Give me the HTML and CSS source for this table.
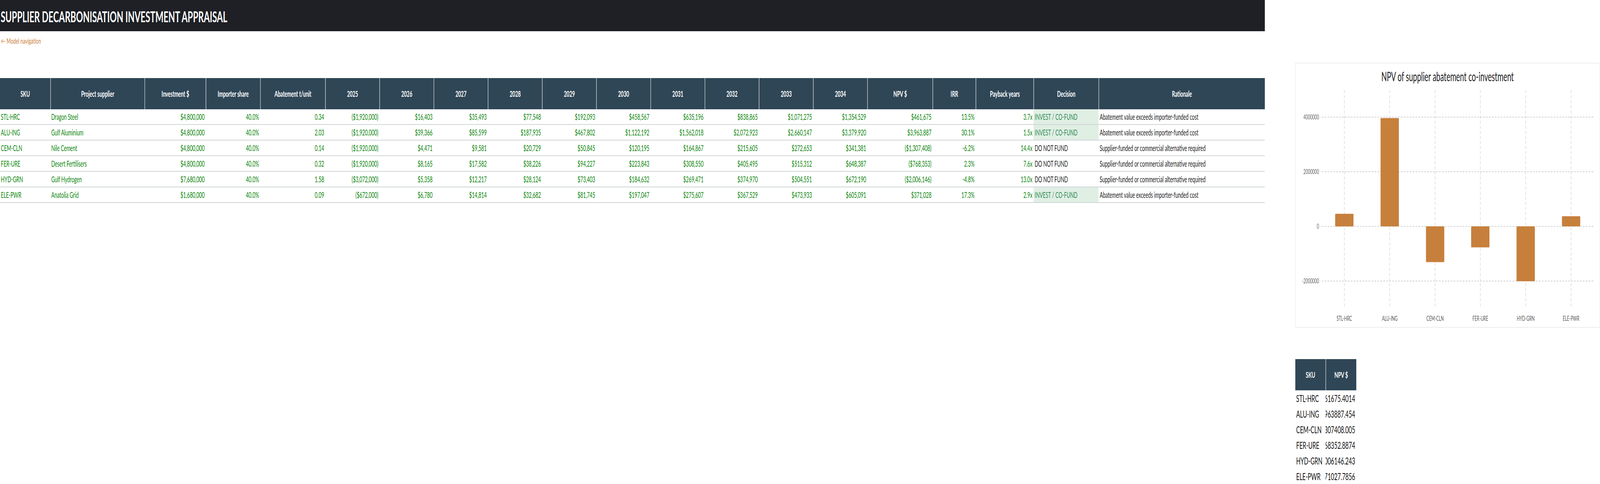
FILE: index.html
```html
<!DOCTYPE html>
<html lang="en">
<head>
<meta charset="utf-8">
<title>Supplier Decarbonisation Investment Appraisal</title>
<link rel="stylesheet" href="styles.css">
</head>
<body>
<div class="page">
  <main class="main">
    <header class="topbar"><h1 class="title">SUPPLIER DECARBONISATION INVESTMENT APPRAISAL</h1></header>
    <a class="nav-link" href="#">← Model navigation</a>
    <table class="grid">
      <colgroup>
        <col style="width:223px"><col style="width:417px"><col style="width:271px"><col style="width:241px"><col style="width:288px">
        <col style="width:240px"><col style="width:240px"><col style="width:240px"><col style="width:240px"><col style="width:240px">
        <col style="width:240px"><col style="width:240px"><col style="width:240px"><col style="width:240px"><col style="width:240px">
        <col style="width:289px"><col style="width:191px"><col style="width:256px"><col style="width:288px"><col style="width:736px">
      </colgroup>
      <thead>
        <tr>
          <th>SKU</th><th>Project supplier</th><th>Investment $</th><th>Importer share</th><th>Abatement t/unit</th>
          <th>2025</th><th>2026</th><th>2027</th><th>2028</th><th>2029</th><th>2030</th><th>2031</th><th>2032</th><th>2033</th><th>2034</th>
          <th>NPV $</th><th>IRR</th><th>Payback years</th><th>Decision</th><th>Rationale</th>
        </tr>
      </thead>
      <tbody>
        <tr>
          <td class="txt">STL-HRC</td><td class="txt">Dragon Steel</td><td>$4,800,000</td><td>40.0%</td><td>0.34</td>
          <td>($1,920,000)</td><td>$16,403</td><td>$35,493</td><td>$77,548</td><td>$192,093</td><td>$458,567</td><td>$635,196</td><td>$838,865</td><td>$1,071,275</td><td>$1,354,529</td>
          <td>$461,675</td><td>13.5%</td><td>3.7x</td><td class="decision invest">INVEST / CO-FUND</td><td class="rationale">Abatement value exceeds importer-funded cost</td>
        </tr>
        <tr>
          <td class="txt">ALU-ING</td><td class="txt">Gulf Aluminium</td><td>$4,800,000</td><td>40.0%</td><td>2.03</td>
          <td>($1,920,000)</td><td>$39,366</td><td>$85,599</td><td>$187,935</td><td>$467,802</td><td>$1,122,192</td><td>$1,562,018</td><td>$2,072,923</td><td>$2,660,147</td><td>$3,379,920</td>
          <td>$3,963,887</td><td>30.1%</td><td>1.5x</td><td class="decision invest">INVEST / CO-FUND</td><td class="rationale">Abatement value exceeds importer-funded cost</td>
        </tr>
        <tr>
          <td class="txt">CEM-CLN</td><td class="txt">Nile Cement</td><td>$4,800,000</td><td>40.0%</td><td>0.14</td>
          <td>($1,920,000)</td><td>$4,471</td><td>$9,581</td><td>$20,729</td><td>$50,845</td><td>$120,195</td><td>$164,867</td><td>$215,605</td><td>$272,653</td><td>$341,381</td>
          <td>($1,307,408)</td><td>-6.2%</td><td>14.4x</td><td class="decision">DO NOT FUND</td><td class="rationale">Supplier-funded or commercial alternative required</td>
        </tr>
        <tr>
          <td class="txt">FER-URE</td><td class="txt">Desert Fertilisers</td><td>$4,800,000</td><td>40.0%</td><td>0.32</td>
          <td>($1,920,000)</td><td>$8,165</td><td>$17,582</td><td>$38,226</td><td>$94,227</td><td>$223,843</td><td>$308,550</td><td>$405,495</td><td>$515,312</td><td>$648,387</td>
          <td>($768,353)</td><td>2.3%</td><td>7.6x</td><td class="decision">DO NOT FUND</td><td class="rationale">Supplier-funded or commercial alternative required</td>
        </tr>
        <tr>
          <td class="txt">HYD-GRN</td><td class="txt">Gulf Hydrogen</td><td>$7,680,000</td><td>40.0%</td><td>1.58</td>
          <td>($3,072,000)</td><td>$5,358</td><td>$12,217</td><td>$28,124</td><td>$73,403</td><td>$184,632</td><td>$269,471</td><td>$374,970</td><td>$504,551</td><td>$672,190</td>
          <td>($2,006,146)</td><td>-4.8%</td><td>13.0x</td><td class="decision">DO NOT FUND</td><td class="rationale">Supplier-funded or commercial alternative required</td>
        </tr>
        <tr>
          <td class="txt">ELE-PWR</td><td class="txt">Anatolia Grid</td><td>$1,680,000</td><td>40.0%</td><td>0.09</td>
          <td>($672,000)</td><td>$6,780</td><td>$14,814</td><td>$32,682</td><td>$81,745</td><td>$197,047</td><td>$275,607</td><td>$367,529</td><td>$473,933</td><td>$605,091</td>
          <td>$371,028</td><td>17.3%</td><td>2.9x</td><td class="decision invest">INVEST / CO-FUND</td><td class="rationale">Abatement value exceeds importer-funded cost</td>
        </tr>
      </tbody>
    </table>
  </main>
  <aside class="side">
    <div class="chart-card">
      <svg class="chart" width="1346" height="676" viewBox="0 0 1346 676">
        <text class="chart-title" x="673" y="46" text-anchor="middle">NPV of supplier abatement co-investment</text>
        <g class="grid-lines">
          <line x1="115" y1="138" x2="1320" y2="138"/>
          <line x1="115" y1="278" x2="1320" y2="278"/>
          <line x1="115" y1="418" x2="1320" y2="418"/>
          <line x1="115" y1="558" x2="1320" y2="558"/>
          <line x1="216" y1="69" x2="216" y2="624"/>
          <line x1="417" y1="69" x2="417" y2="624"/>
          <line x1="618" y1="69" x2="618" y2="624"/>
          <line x1="818" y1="69" x2="818" y2="624"/>
          <line x1="1019" y1="69" x2="1019" y2="624"/>
          <line x1="1220" y1="69" x2="1220" y2="624"/>
        </g>
        <g class="y-labels">
          <text x="104" y="144" text-anchor="end">4000000</text>
          <text x="104" y="284" text-anchor="end">2000000</text>
          <text x="104" y="424" text-anchor="end">0</text>
          <text x="104" y="564" text-anchor="end">-2000000</text>
        </g>
        <g class="bars">
          <rect x="175.5" y="385.7" width="81" height="32.3" rx="2"/>
          <rect x="376.5" y="140.5" width="81" height="277.5" rx="2"/>
          <rect x="577.5" y="418" width="81" height="91.5" rx="2"/>
          <rect x="777.5" y="418" width="81" height="53.8" rx="2"/>
          <rect x="978.5" y="418" width="81" height="140.4" rx="2"/>
          <rect x="1179.5" y="392" width="81" height="26" rx="2"/>
        </g>
        <g class="x-labels">
          <text x="216" y="660" text-anchor="middle">STL-HRC</text>
          <text x="417" y="660" text-anchor="middle">ALU-ING</text>
          <text x="618" y="660" text-anchor="middle">CEM-CLN</text>
          <text x="818" y="660" text-anchor="middle">FER-URE</text>
          <text x="1019" y="660" text-anchor="middle">HYD-GRN</text>
          <text x="1220" y="660" text-anchor="middle">ELE-PWR</text>
        </g>
      </svg>
    </div>
    <table class="mini">
      <colgroup><col style="width:134px"><col style="width:136px"></colgroup>
      <thead><tr><th>SKU</th><th>NPV $</th></tr></thead>
      <tbody>
        <tr><td>STL-HRC</td><td class="num"><div class="clip"><span>461675.4014</span></div></td></tr>
        <tr><td>ALU-ING</td><td class="num"><div class="clip"><span>3963887.454</span></div></td></tr>
        <tr><td>CEM-CLN</td><td class="num"><div class="clip"><span>-1307408.005</span></div></td></tr>
        <tr><td>FER-URE</td><td class="num"><div class="clip"><span>-768352.8874</span></div></td></tr>
        <tr><td>HYD-GRN</td><td class="num"><div class="clip"><span>-2006146.243</span></div></td></tr>
        <tr><td>ELE-PWR</td><td class="num"><div class="clip"><span>371027.7856</span></div></td></tr>
      </tbody>
    </table>
  </aside>
</div>
<script src="app.js"></script>
</body>
</html>
```

FILE: styles.css
```css
* { box-sizing: border-box; }
html, body { margin: 0; padding: 0; background: #ffffff; overflow: hidden; }
body {
  font-family: Lato, "Open Sans", "Liberation Sans", sans-serif;
  color: #1e1e1e;
  height: 1240px;
}
/* The sheet is designed on a 7084px-wide canvas; --fit-x squeezes it to the viewport width. */
.page {
  display: flex;
  align-items: flex-start;
  width: 7084px;
  transform: scaleX(var(--fit-x, 1));
  transform-origin: 0 0;
}
.main { width: 5600px; flex: none; }
.side { width: 1348px; margin-left: 135px; flex: none; }

.topbar {
  height: 80px;
  background: #1e2025;
  display: flex;
  align-items: center;
  padding: 5px 0 0 3px;
}
.title {
  margin: 0;
  color: #ffffff;
  font-size: 38px;
  font-weight: 700;
  line-height: 1.2;
}
.nav-link {
  display: inline-block;
  margin-top: 12px;
  margin-left: 4px;
  font-size: 20px;
  color: #c8803c;
  text-decoration: none;
  line-height: 24px;
}

.grid {
  margin-top: 84px;
  width: 5600px;
  table-layout: fixed;
  border-collapse: separate;
  border-spacing: 0;
  font-size: 21px;
}
.grid th {
  background: #2f4656;
  color: #ffffff;
  font-weight: 700;
  height: 80px;
  line-height: 80px;
  padding: 0 5px;
  text-align: center;
  white-space: nowrap;
  border-left: 2px solid #d6dce0;
}
.grid th:first-child { border-left: none; }
.grid td {
  line-height: 38px;
  padding: 0 5px;
  text-align: right;
  color: #0a850a;
  white-space: nowrap;
  border-bottom: 2px solid #cfd4d8;
  overflow: hidden;
}
.grid td.txt { text-align: left; padding-left: 4px; }
.grid td.decision { text-align: left; color: #1e1e1e; }
.grid td.decision.invest { background: #e0efe4; color: #2e8a55; }
.grid td.rationale { text-align: left; color: #1e1e1e; }

.chart-card {
  margin-top: 161px;
  width: 1348px;
  height: 678px;
  border: 1px solid #dcdcdc;
  background: #ffffff;
}
.chart { display: block; font-family: Lato, "Open Sans", sans-serif; }
.chart-title { font-size: 32px; fill: #222222; }
.grid-lines line { stroke: #d2d2d2; stroke-width: 2; stroke-dasharray: 8 5; }
.y-labels text { font-size: 17px; fill: #666666; }
.x-labels text { font-size: 17px; fill: #555555; }
.bars rect { fill: #c77f3c; }

.mini {
  margin-top: 81px;
  width: 270px;
  table-layout: fixed;
  border-collapse: separate;
  border-spacing: 0;
}
.mini th {
  background: #2f4656;
  color: #ffffff;
  font-size: 21px;
  font-weight: 700;
  height: 80px;
  line-height: 80px;
  padding: 0;
  text-align: center;
  border-left: 2px solid #c9d0d5;
}
.mini th:first-child { border-left: none; }
.mini td {
  font-size: 25px;
  line-height: 40px;
  padding: 0 4px;
  color: #111111;
  white-space: nowrap;
}
.mini td.num { padding: 0 5px 0 0; }
.clip { display: flex; justify-content: flex-end; overflow: hidden; width: 100%; }
.clip span { flex: none; }
```

FILE: app.js
```js
// Fit the 7084px-wide sheet into the available viewport width.
(function () {
  var fit = Math.min(1, window.innerWidth / 7084);
  document.documentElement.style.setProperty('--fit-x', String(fit));
})();
```
